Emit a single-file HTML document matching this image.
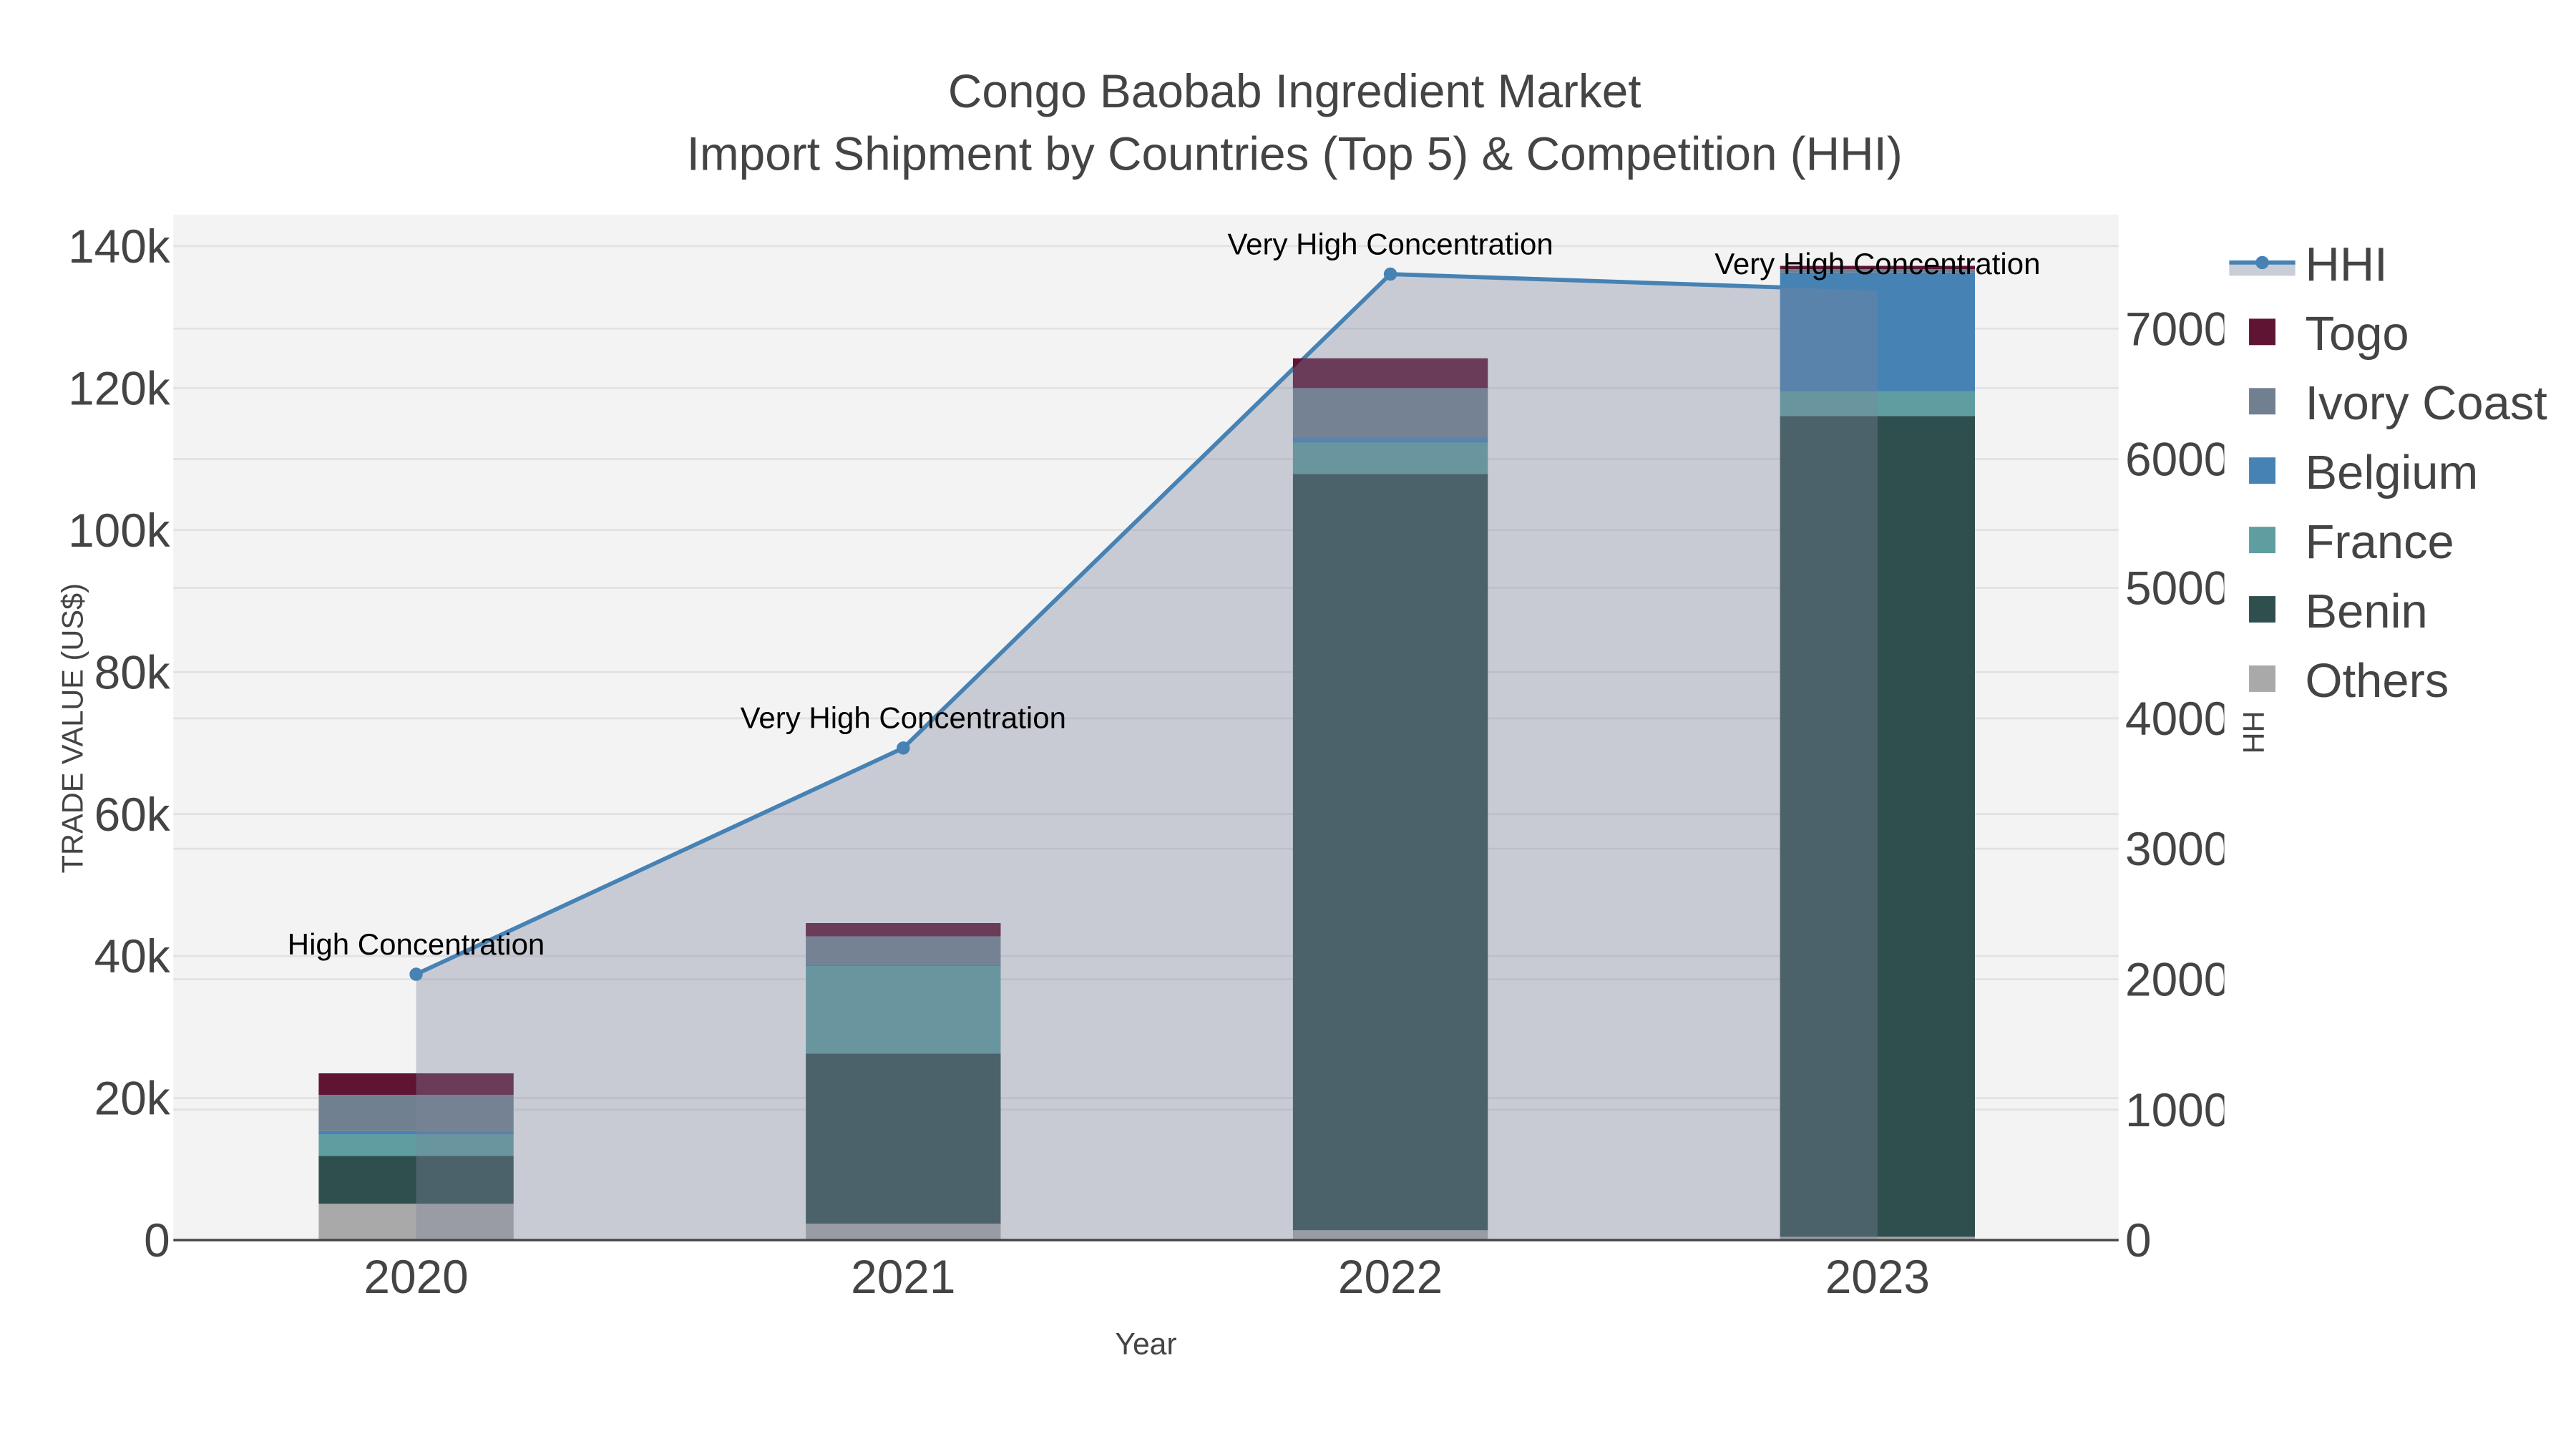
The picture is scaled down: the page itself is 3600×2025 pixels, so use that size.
<!DOCTYPE html>
<html><head><meta charset="utf-8"><style>
html,body{margin:0;padding:0;background:#fff;}
svg{display:block;}
text{font-family:"Liberation Sans",sans-serif;}
</style></head><body>
<svg width="3600" height="2025" viewBox="0 0 1560 877.5" xmlns="http://www.w3.org/2000/svg">
<defs>
<clipPath id="rc"><rect x="1280" y="0" width="67" height="877"/></clipPath>
<clipPath id="bc">
<rect x="193" y="650" width="118" height="101"/>
<rect x="488" y="559" width="118" height="192"/>
<rect x="783" y="217" width="118" height="534"/>
<rect x="1078" y="161" width="118" height="590"/>
</clipPath>
</defs>
<rect x="0" y="0" width="1560" height="877.5" fill="#fff"/>
<rect x="105" y="130" width="1178" height="621" fill="#f3f3f3"/>
<g stroke="#e2e2e2" stroke-width="1.2">
<line x1="105" x2="1283" y1="665" y2="665"/><line x1="105" x2="1283" y1="579" y2="579"/>
<line x1="105" x2="1283" y1="493" y2="493"/><line x1="105" x2="1283" y1="407" y2="407"/>
<line x1="105" x2="1283" y1="321" y2="321"/><line x1="105" x2="1283" y1="235" y2="235"/>
<line x1="105" x2="1283" y1="149" y2="149"/>
<line x1="105" x2="1283" y1="672" y2="672"/><line x1="105" x2="1283" y1="593" y2="593"/>
<line x1="105" x2="1283" y1="514" y2="514"/><line x1="105" x2="1283" y1="435" y2="435"/>
<line x1="105" x2="1283" y1="356" y2="356"/><line x1="105" x2="1283" y1="278" y2="278"/>
<line x1="105" x2="1283" y1="199" y2="199"/>
</g>
<polygon points="252,590 547,453 842,166 1137,176 1137,751 252,751" fill="rgb(126,134,154)" fill-opacity="0.36"/>
<polyline points="252,590 547,453 842,166 1137,176" fill="none" stroke="#4682b4" stroke-width="2.5"/>
<g fill="#4682b4"><circle cx="252" cy="590" r="4"/><circle cx="547" cy="453" r="4"/><circle cx="842" cy="166" r="4"/><circle cx="1137" cy="176" r="4"/></g>
<g>
<rect x="193" y="729" width="118" height="22" fill="#a9a9a9"/>
<rect x="193" y="700" width="118" height="29" fill="#2f4f4f"/>
<rect x="193" y="687" width="118" height="13" fill="#5f9ea0"/>
<rect x="193" y="685" width="118" height="2" fill="#4682b4"/>
<rect x="193" y="663" width="118" height="22" fill="#708090"/>
<rect x="193" y="650" width="118" height="13" fill="#601434"/>

<rect x="488" y="741" width="118" height="10" fill="#a9a9a9"/>
<rect x="488" y="638" width="118" height="103" fill="#2f4f4f"/>
<rect x="488" y="585" width="118" height="53" fill="#5f9ea0"/>
<rect x="488" y="584" width="118" height="1" fill="#4682b4"/>
<rect x="488" y="567" width="118" height="17" fill="#708090"/>
<rect x="488" y="559" width="118" height="8" fill="#601434"/>

<rect x="783" y="745" width="118" height="6" fill="#a9a9a9"/>
<rect x="783" y="287" width="118" height="458" fill="#2f4f4f"/>
<rect x="783" y="268" width="118" height="19" fill="#5f9ea0"/>
<rect x="783" y="265" width="118" height="3" fill="#4682b4"/>
<rect x="783" y="235" width="118" height="30" fill="#708090"/>
<rect x="783" y="217" width="118" height="18" fill="#601434"/>

<rect x="1078" y="749" width="118" height="2" fill="#a9a9a9"/>
<rect x="1078" y="252" width="118" height="497" fill="#2f4f4f"/>
<rect x="1078" y="237" width="118" height="15" fill="#5f9ea0"/>
<rect x="1078" y="165" width="118" height="72" fill="#4682b4"/>
<rect x="1078" y="163" width="118" height="2" fill="#708090"/>
<rect x="1078" y="161" width="118" height="2" fill="#601434"/>
</g>
<polygon clip-path="url(#bc)" points="252,590 547,453 842,166 1137,176 1137,751 252,751" fill="rgb(126,134,154)" fill-opacity="0.36"/>
<line x1="105" x2="1283" y1="751" y2="751" stroke="#444" stroke-width="1.5"/>
<g font-size="28.5" fill="#444" text-anchor="end">
<text x="103" y="761">0</text><text x="103" y="675">20k</text><text x="103" y="589">40k</text>
<text x="103" y="503">60k</text><text x="103" y="417">80k</text><text x="103" y="331">100k</text>
<text x="103" y="245">120k</text><text x="103" y="159">140k</text>
</g>
<g font-size="28.5" fill="#444" clip-path="url(#rc)">
<text x="1287" y="761">0</text><text x="1287" y="682">1000</text><text x="1287" y="603">2000</text>
<text x="1287" y="524">3000</text><text x="1287" y="445">4000</text><text x="1287" y="366">5000</text>
<text x="1287" y="288">6000</text><text x="1287" y="209">7000</text>
</g>
<g font-size="28.5" fill="#444" text-anchor="middle">
<text x="252" y="783">2020</text><text x="547" y="783">2021</text><text x="842" y="783">2022</text><text x="1137" y="783">2023</text>
</g>
<text x="694" y="820" font-size="18.5" fill="#444" text-anchor="middle">Year</text>
<text transform="translate(50,441) rotate(-90)" font-size="18" fill="#444" text-anchor="middle">TRADE VALUE (US$)</text>
<text transform="translate(1371,441) rotate(-90)" font-size="18" fill="#444" text-anchor="middle">HHI</text>
<g font-size="28.5" fill="#444" text-anchor="middle">
<text x="784" y="65">Congo Baobab Ingredient Market</text>
<text x="784" y="103">Import Shipment by Countries (Top 5) &amp; Competition (HHI)</text>
</g>
<g font-size="18.2" fill="#000" text-anchor="middle">
<text x="252" y="578">High Concentration</text>
<text x="547" y="441">Very High Concentration</text>
<text x="842" y="154">Very High Concentration</text>
<text x="1137" y="166">Very High Concentration</text>
</g>
<rect x="1348" y="130" width="212" height="300" fill="#fff"/>
<rect x="1350" y="159" width="40" height="8" fill="#c9ced6"/>
<line x1="1350" x2="1390" y1="159" y2="159" stroke="#4682b4" stroke-width="2.5"/>
<circle cx="1370" cy="159" r="4" fill="#4682b4"/>
<g font-size="29" fill="#444">
<text x="1396" y="170">HHI</text>
<text x="1396" y="212">Togo</text>
<text x="1396" y="254">Ivory Coast</text>
<text x="1396" y="296">Belgium</text>
<text x="1396" y="338">France</text>
<text x="1396" y="380">Benin</text>
<text x="1396" y="422">Others</text>
</g>
<rect x="1362" y="193" width="16" height="16" fill="#601434"/>
<rect x="1362" y="235" width="16" height="16" fill="#708090"/>
<rect x="1362" y="277" width="16" height="16" fill="#4682b4"/>
<rect x="1362" y="319" width="16" height="16" fill="#5f9ea0"/>
<rect x="1362" y="361" width="16" height="16" fill="#2f4f4f"/>
<rect x="1362" y="403" width="16" height="16" fill="#a9a9a9"/>
</svg>
</body></html>
